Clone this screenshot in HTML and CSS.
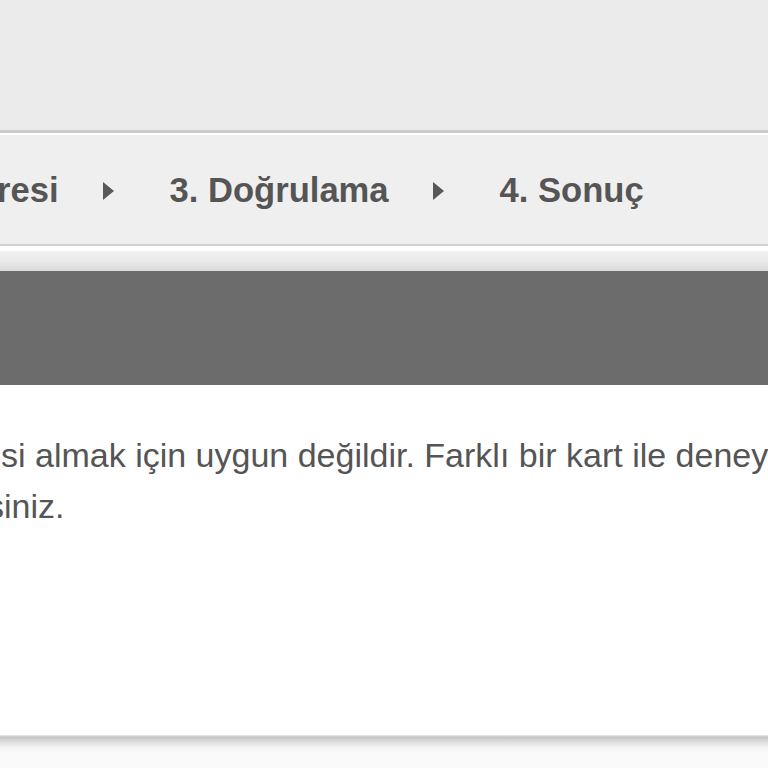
FILE: index.html
```html
<!DOCTYPE html>
<html lang="tr">
<head>
<meta charset="utf-8">
<title>Doğrulama</title>
<link rel="stylesheet" href="styles.css">
</head>
<body>
<div class="page">
  <header class="top"></header>
  <nav class="steps">
    <div class="steps-row">
      <span class="step">resi</span>
      <span class="arrow"></span>
      <span class="step">3. Doğrulama</span>
      <span class="arrow"></span>
      <span class="step">4. Sonuç</span>
    </div>
  </nav>
  <div class="steps-shadow"></div>
  <section class="panel">
    <div class="panel-head"></div>
    <div class="panel-body">
      <p class="message">si almak için uygun değildir. Farklı bir kart ile deneyebilirsiniz.<br>siniz.</p>
    </div>
  </section>
  <div class="panel-shadow"></div>
</div>
</body>
</html>
```

FILE: styles.css
```css
html, body {
  margin: 0;
  padding: 0;
}
body {
  background: #fafafa;
  font-family: "Liberation Sans", Arial, sans-serif;
  overflow: hidden;
  width: 768px;
  height: 768px;
}
.page {
  display: flex;
  flex-direction: column;
}
.top {
  height: 130px;
  background: #ebebeb;
}
.steps {
  box-sizing: border-box;
  height: 116px;
  border-top: 3px solid #cbcbcb;
  border-bottom: 2px solid #d2d2d2;
  background: #efefef;
  box-shadow: inset 0 2px 0 #ffffff;
  padding-top: 38px;
}
.steps-row {
  display: flex;
  align-items: center;
  margin-left: -3px;
  white-space: nowrap;
}
.step {
  font-size: 34.6px;
  font-weight: bold;
  color: #555555;
}
.arrow {
  width: 0;
  height: 0;
  border-top: 9px solid transparent;
  border-bottom: 9px solid transparent;
  border-left: 11px solid #585858;
  margin-left: 44px;
  margin-right: 56px;
}
.steps-shadow {
  height: 25px;
  background: linear-gradient(to bottom, #ffffff 0px, #ffffff 4px, #f0f0f0 6px, #ebebeb 14px, #dadada 25px);
}
.panel-head {
  height: 114px;
  background: #6c6c6c;
}
.panel-body {
  box-sizing: border-box;
  height: 350px;
  background: #ffffff;
  padding-top: 45px;
  overflow: hidden;
}
.message {
  margin: 0 0 0 -13px;
  text-indent: 14px;
  font-size: 34px;
  line-height: 51px;
  color: #555555;
  white-space: nowrap;
}
.panel-shadow {
  height: 18px;
  background: linear-gradient(to bottom, #f0f0f0 0px, #c4c4c4 2px, #dedede 7px, #f4f4f4 13px, #fafafa 18px);
}
```
